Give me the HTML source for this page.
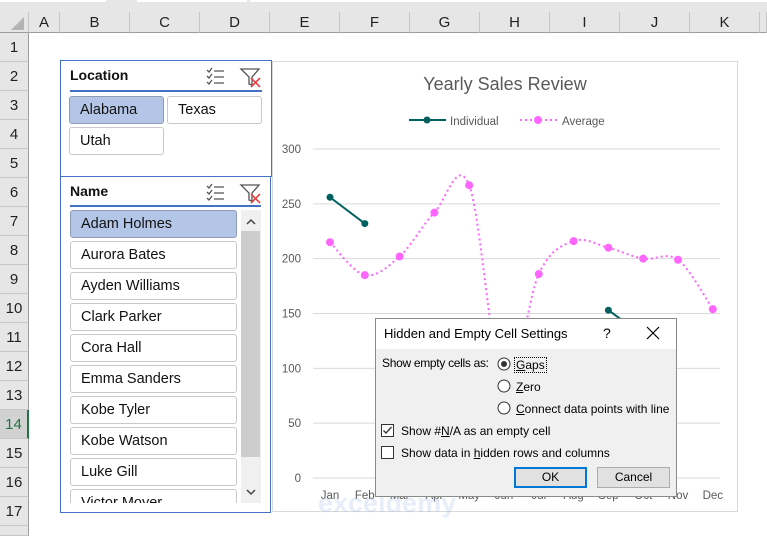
<!DOCTYPE html>
<html style="overflow:hidden;width:767px;height:536px"><head><meta charset="utf-8">
<style>
*{box-sizing:border-box;margin:0;padding:0}
body{width:767px;height:536px;overflow:hidden;background:#fff;font-family:"Liberation Sans",sans-serif;position:relative}
.a{position:absolute}
.colh{top:12px;height:21px;background:#e6e6e6;border-right:1px solid #c6c6c6;border-bottom:1px solid #9c9c9c;font-size:15px;color:#222;text-align:center;line-height:21px}
.rowh{left:0;width:29px;background:#e6e6e6;border-bottom:1px solid #c6c6c6;border-right:1px solid #9c9c9c;font-size:15px;color:#222;text-align:center}
.btn{position:absolute;height:28px;border:1px solid #c8c8c8;border-radius:3px;background:#fff;font-size:14.5px;color:#111;padding-left:10px;line-height:26px}
.sel{background:#b4c6e7;border-color:#8e9bb3}
.dl{font-family:"Liberation Sans",sans-serif;font-size:12px;color:#000}
</style></head><body>
<div class="a" style="left:0;top:0;width:767px;height:12px;background:#e6e6e6"></div>
<div class="a" style="left:0;top:0;width:106px;height:2px;background:#fff"></div>
<div class="a" style="left:137px;top:0;width:110px;height:2px;background:#fff"></div>
<div class="a" style="left:250px;top:0;width:517px;height:2px;background:#fff"></div>
<div class="a colh" style="left:0;width:29px"><svg width="29" height="21" style="position:absolute;left:0;top:0"><polygon points="24,5 24,18 11,18" fill="#b4b4b4"/></svg></div>
<div class="a colh" style="left:29px;width:31px">A</div>
<div class="a colh" style="left:60px;width:70px">B</div>
<div class="a colh" style="left:130px;width:70px">C</div>
<div class="a colh" style="left:200px;width:70px">D</div>
<div class="a colh" style="left:270px;width:70px">E</div>
<div class="a colh" style="left:340px;width:70px">F</div>
<div class="a colh" style="left:410px;width:70px">G</div>
<div class="a colh" style="left:480px;width:70px">H</div>
<div class="a colh" style="left:550px;width:70px">I</div>
<div class="a colh" style="left:620px;width:70px">J</div>
<div class="a colh" style="left:690px;width:70px">K</div>
<div class="a colh" style="left:760px;width:7px"></div>
<div id="rows"></div>

<div class="a" style="left:60px;top:60px;width:212px;height:117px;border:1px solid #4472c4;background:#fff"></div>
<div class="a" style="left:70px;top:67px;font-size:14px;font-weight:bold;color:#111">Location</div>
<div class="a" style="left:70px;top:90px;width:192px;height:2px;background:#4472c4"></div>
<div class="btn sel" style="left:69px;top:96px;width:95px">Alabama</div>
<div class="btn" style="left:167px;top:96px;width:95px">Texas</div>
<div class="btn" style="left:69px;top:127px;width:95px">Utah</div>
<div class="a" style="left:60px;top:176px;width:211px;height:337px;border:1px solid #4472c4;background:#fff"></div>
<div class="a" style="left:70px;top:183px;font-size:14px;font-weight:bold;color:#111">Name</div>
<div class="a" style="left:70px;top:205px;width:191px;height:2px;background:#4472c4"></div>
<div class="a" style="left:62px;top:208px;width:178px;height:295px;overflow:hidden">
<div class="btn sel" style="left:8px;top:2px;width:167px">Adam Holmes</div>
<div class="btn" style="left:8px;top:33px;width:167px">Aurora Bates</div>
<div class="btn" style="left:8px;top:64px;width:167px">Ayden Williams</div>
<div class="btn" style="left:8px;top:95px;width:167px">Clark Parker</div>
<div class="btn" style="left:8px;top:126px;width:167px">Cora Hall</div>
<div class="btn" style="left:8px;top:157px;width:167px">Emma Sanders</div>
<div class="btn" style="left:8px;top:188px;width:167px">Kobe Tyler</div>
<div class="btn" style="left:8px;top:219px;width:167px">Kobe Watson</div>
<div class="btn" style="left:8px;top:250px;width:167px">Luke Gill</div>
<div class="btn" style="left:8px;top:281px;width:167px">Victor Moyer</div>
</div>
<div class="a" style="left:241px;top:210px;width:20px;height:293px;background:#f0f0f0"></div>
<div class="a" style="left:241px;top:231px;width:19px;height:226px;background:#cdcdcd"></div>
<svg class="a" style="left:241px;top:210px" width="20" height="293"><path d="M6 14 L10 10 L14 14" stroke="#444" stroke-width="1.5" fill="none"/><path d="M6 280 L10 284 L14 280" stroke="#444" stroke-width="1.5" fill="none"/></svg>
<svg class="a" style="left:205px;top:66px" width="60" height="22">
<g stroke="#555" stroke-width="1.3" fill="none">
<path d="M2 4 L4 6 L7 2 M2 10 L4 12 L7 8 M2 16 L4 18 L7 14"/>
<path d="M9 5 H19 M9 11 H19 M9 17 H19"/>
<path d="M36 3 H54 L47 11 V19 L44 18 V11 Z"/>
</g>
<path d="M46 12 L55 21 M55 12 L46 21" stroke="#e64040" stroke-width="1.6"/>
</svg>
<svg class="a" style="left:205px;top:182px" width="60" height="22">
<g stroke="#555" stroke-width="1.3" fill="none">
<path d="M2 4 L4 6 L7 2 M2 10 L4 12 L7 8 M2 16 L4 18 L7 14"/>
<path d="M9 5 H19 M9 11 H19 M9 17 H19"/>
<path d="M36 3 H54 L47 11 V19 L44 18 V11 Z"/>
</g>
<path d="M46 12 L55 21 M55 12 L46 21" stroke="#e64040" stroke-width="1.6"/>
</svg>

<div class="a" style="left:272px;top:61px;width:466px;height:451px;border:1px solid #d9d9d9;background:#fff"></div>
<div class="a" style="left:272px;top:74px;width:466px;text-align:center;font-size:18px;color:#595959">Yearly Sales Review</div>
<svg class="a" id="ch" style="left:0;top:0" width="767" height="536"></svg>
<div class="a" style="left:318px;top:488px;font-size:27px;font-weight:bold;color:rgba(170,190,235,0.28)">exceldemy</div>

<div class="a" style="left:375px;top:318px;width:302px;height:179px;border:1px solid #8a8a8a;background:#f0f0f0"></div>
<div class="a" style="left:376px;top:319px;width:300px;height:30px;background:#fff"></div>
<div class="a" style="left:384px;top:326px;font-size:13px;color:#000">Hidden and Empty Cell Settings</div>
<div class="a" style="left:603px;top:325px;font-size:14px;color:#000">?</div>
<svg class="a" style="left:646px;top:326px" width="14" height="14"><path d="M1 1 L13 13 M13 1 L1 13" stroke="#000" stroke-width="1.2"/></svg>
<div class="a dl" style="left:382px;top:356px;letter-spacing:-0.3px">Show empty cells as:</div>
<svg class="a" style="left:496px;top:356px" width="18" height="80">
<circle cx="8" cy="8" r="6" fill="#fff" stroke="#333"/><circle cx="8" cy="8" r="3" fill="#333"/>
<circle cx="8" cy="30" r="6" fill="#fff" stroke="#333"/>
<circle cx="8" cy="52" r="6" fill="#fff" stroke="#333"/>
</svg>
<div class="a dl" style="left:514px;top:357px;border:1px dotted #000;padding:0 1px"><u>G</u>aps</div>
<div class="a dl" style="left:516px;top:380px"><u>Z</u>ero</div>
<div class="a dl" style="left:516px;top:402px"><u>C</u>onnect data points with line</div>
<svg class="a" style="left:381px;top:424px" width="14" height="40">
<rect x="0.5" y="0.5" width="12" height="12" fill="#fff" stroke="#333"/><path d="M2.5 6.5 L5 9 L10.5 3" stroke="#333" stroke-width="1.3" fill="none"/>
<rect x="0.5" y="22.5" width="12" height="12" fill="#fff" stroke="#333"/>
</svg>
<div class="a dl" style="left:401px;top:424px">Show #<u>N</u>/A as an empty cell</div>
<div class="a dl" style="left:401px;top:446px">Show data in <u>h</u>idden rows and columns</div>
<div class="a dl" style="left:514px;top:467px;width:73px;height:21px;border:2px solid #0078d7;background:#e1e1e1;text-align:center;line-height:17px">OK</div>
<div class="a dl" style="left:597px;top:467px;width:73px;height:21px;border:1px solid #adadad;background:#e1e1e1;text-align:center;line-height:19px">Cancel</div>

<script>
var r=document.getElementById('rows'),h='';
for(var i=1;i<=18;i++){var t=33+(i-1)*29;var s=i==14;
h+='<div class="a rowh" style="top:'+t+'px;height:'+(i<18?29:10)+'px;line-height:29px;'+(s?'background:#d2d2d2;color:#217346;border-right:2px solid #217346;':'')+'">'+(i<18?i:'')+'</div>';}
r.innerHTML=h;
var sv=document.getElementById('ch'),o='';
function Y(v){return 478-v*329/300}
for(var v=0;v<=300;v+=50){var y=Y(v);o+='<line x1="313" x2="720" y1="'+y+'" y2="'+y+'" stroke="#d9d9d9"/>';
o+='<text x="301" y="'+(y+4)+'" text-anchor="end" font-size="11.5" fill="#595959" font-family="Liberation Sans">'+v+'</text>';}
var m=['Jan','Feb','Mar','Apr','May','Jun','Jul','Aug','Sep','Oct','Nov','Dec'];
function X(i){return 330+i*34.8}
for(var i=0;i<12;i++)o+='<text x="'+X(i)+'" y="499" text-anchor="middle" font-size="11.5" fill="#595959" font-family="Liberation Sans">'+m[i]+'</text>';
var a=[215,185,202,242,267,80,186,216,210,200,199,154],P=a.map(function(v,i){return[X(i),Y(v)]});
var d='M'+P[0];for(var i=0;i<11;i++){var p0=P[Math.max(0,i-1)],p1=P[i],p2=P[i+1],p3=P[Math.min(11,i+2)];
d+=' C'+(p1[0]+(p2[0]-p0[0])/6)+','+(p1[1]+(p2[1]-p0[1])/6)+' '+(p2[0]-(p3[0]-p1[0])/6)+','+(p2[1]-(p3[1]-p1[1])/6)+' '+p2;}
o+='<path d="'+d+'" fill="none" stroke="#ff66ff" stroke-width="2" stroke-dasharray="2 3"/>';
P.forEach(function(p,i){if(i!=5)o+='<circle cx="'+p[0]+'" cy="'+p[1]+'" r="4" fill="#ff66ff"/>'});
o+='<path d="M'+X(0)+','+Y(256)+' L'+X(1)+','+Y(232)+'" stroke="#006060" stroke-width="2"/>';
o+='<circle cx="'+X(0)+'" cy="'+Y(256)+'" r="3.5" fill="#006060"/><circle cx="'+X(1)+'" cy="'+Y(232)+'" r="3.5" fill="#006060"/>';
o+='<path d="M'+X(8)+','+Y(153)+' L'+X(9)+','+Y(130)+'" stroke="#006060" stroke-width="2"/><circle cx="'+X(8)+'" cy="'+Y(153)+'" r="3.5" fill="#006060"/>';
o+='<line x1="409" x2="446" y1="120" y2="120" stroke="#006060" stroke-width="2"/><circle cx="427" cy="120" r="3.5" fill="#006060"/>';
o+='<text x="450" y="125" font-size="11.5" fill="#595959" font-family="Liberation Sans">Individual</text>';
o+='<line x1="520" x2="557" y1="120" y2="120" stroke="#ff66ff" stroke-width="2" stroke-dasharray="2 3"/><circle cx="538" cy="120" r="4" fill="#ff66ff"/>';
o+='<text x="562" y="125" font-size="11.5" fill="#595959" font-family="Liberation Sans">Average</text>';
sv.innerHTML=o;
</script>
</body></html>
